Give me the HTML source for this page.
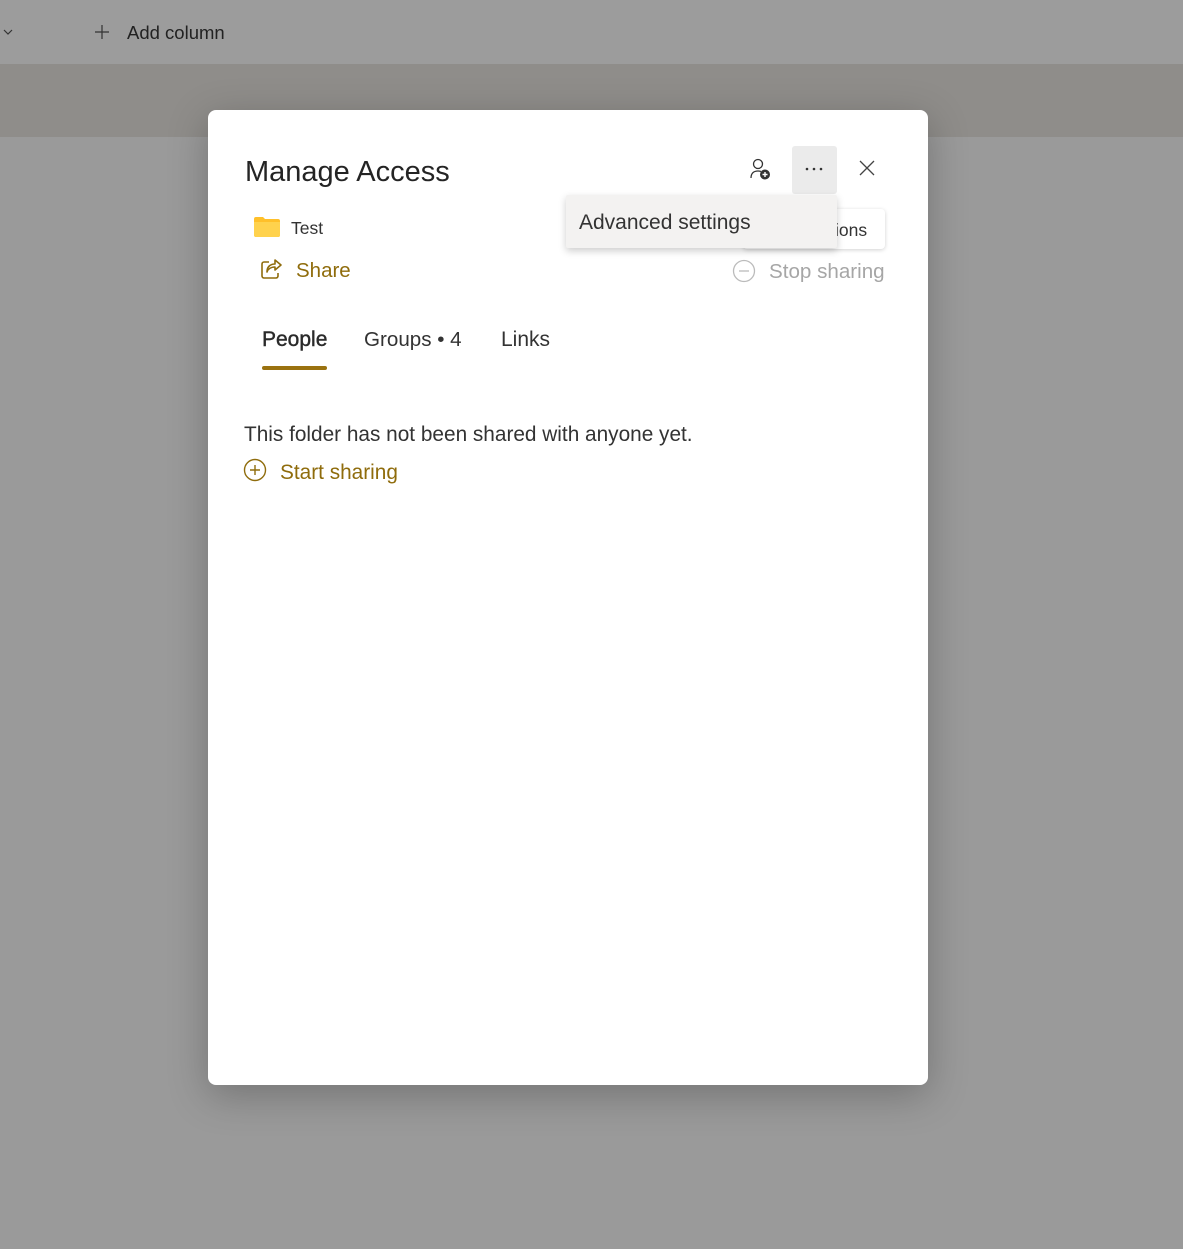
<!DOCTYPE html>
<html><head><meta charset="utf-8"><style>
*{box-sizing:border-box;margin:0;padding:0}
body{width:1183px;height:1249px;background:#9a9a9a;font-family:"Liberation Sans",sans-serif;position:relative;overflow:hidden}
.top{position:absolute;left:0;top:0;width:1183px;height:64px;background:#9c9c9c}
.band{position:absolute;left:0;top:64px;width:1183px;height:73px;background:#8f8d8a}
.abs{position:absolute}
.dlg{position:absolute;left:208px;top:110px;width:720px;height:975px;background:#fff;border-radius:8px;box-shadow:0 10px 40px rgba(0,0,0,.25)}
.gold{color:#8f6c0c}
</style></head><body>
<div class="top"></div>
<div class="band"></div>
<svg class="abs" style="left:2px;top:27px" width="12" height="10" viewBox="0 0 12 10"><path d="M2 3l4 4 4-4" fill="none" stroke="#333" stroke-width="1.2"/></svg>
<svg class="abs" style="left:94px;top:24px" width="16" height="16" viewBox="0 0 16 16"><path d="M8 1v14M1 8h14" stroke="#333" stroke-width="1.2"/></svg>
<div class="abs" style="left:127px;top:22px;font-size:18.5px;color:#222">Add column</div>

<div class="dlg">
<div class="abs" style="left:37px;top:46px;font-size:29px;color:#242424">Manage Access</div>
<svg class="abs" style="left:540px;top:47px" width="26" height="26" viewBox="0 0 26 26"><circle cx="10" cy="7" r="4.5" fill="none" stroke="#333" stroke-width="1.3"/><path d="M3 21c0-5 3-7 7-7 1 0 2 .2 3 .5" fill="none" stroke="#333" stroke-width="1.3"/><circle cx="17" cy="17.5" r="5" fill="#333"/><path d="M17 15v5M14.5 17.5h5" stroke="#fff" stroke-width="1.4"/></svg>
<div class="abs" style="left:584px;top:36px;width:45px;height:48px;background:#ebebeb;border-radius:3px"></div>
<svg class="abs" style="left:597px;top:57px" width="18" height="4" viewBox="0 0 18 4"><circle cx="2" cy="2" r="1.3" fill="#333"/><circle cx="9" cy="2" r="1.3" fill="#333"/><circle cx="16" cy="2" r="1.3" fill="#333"/></svg>
<svg class="abs" style="left:651px;top:50px" width="16" height="16" viewBox="0 0 16 16"><path d="M1 1l14 14M15 1L1 15" stroke="#444" stroke-width="1.3"/></svg>

<div class="abs" style="left:535px;top:99px;width:142px;height:40px;background:#fff;border-radius:4px;box-shadow:0 1px 4px rgba(0,0,0,.18);font-size:17.5px;color:#333;padding:11px 0 0 92px">ions</div>
<div class="abs" style="left:358px;top:85px;width:271px;height:53px;background:#f3f2f1;box-shadow:0 3px 8px rgba(0,0,0,.2);font-size:21px;color:#333;padding:16px 0 0 13px;border-radius:2px">Advanced settings</div>

<svg class="abs" style="left:524px;top:149px" width="24" height="24" viewBox="0 0 24 24"><circle cx="12" cy="12" r="10.5" fill="none" stroke="#bbb" stroke-width="1.3"/><path d="M7 12h10" stroke="#bbb" stroke-width="1.3"/></svg>
<div class="abs" style="left:561px;top:150px;font-size:20.6px;color:#a6a6a6">Stop sharing</div>

<svg class="abs" style="left:45px;top:106px" width="28" height="22" viewBox="0 0 28 22"><path d="M1 3a2 2 0 0 1 2-2h7l2 2h13a2 2 0 0 1 2 2v14a2 2 0 0 1-2 2H3a2 2 0 0 1-2-2z" fill="#ffc02a"/><path d="M1 6h26v13a2 2 0 0 1-2 2H3a2 2 0 0 1-2-2z" fill="#ffd24d"/></svg>
<div class="abs" style="left:83px;top:108px;font-size:17.5px;color:#333">Test</div>
<svg class="abs" style="left:52px;top:148px" width="24" height="22" viewBox="0 0 24 22"><path d="M9 4H4a2 2 0 0 0-2 2v12a2 2 0 0 0 2 2h12a2 2 0 0 0 2-2v-3" fill="none" stroke="#8f6c0c" stroke-width="1.6"/><path d="M15 2l6 5-6 5V9c-4 0-7 2-8 5 0-5 3-8 8-8z" fill="none" stroke="#8f6c0c" stroke-width="1.6" stroke-linejoin="round"/></svg>
<div class="abs gold" style="left:88px;top:149px;font-size:20.5px">Share</div>

<div class="abs" style="left:54px;top:218px;font-size:21px;color:#2a2a2a;font-weight:500;-webkit-text-stroke:0.4px #2a2a2a">People</div>
<div class="abs" style="left:54px;top:256px;width:65px;height:4px;background:#9a7210;border-radius:2px"></div>
<div class="abs" style="left:156px;top:218px;font-size:20.6px;color:#333">Groups • 4</div>
<div class="abs" style="left:293px;top:218px;font-size:21px;color:#333">Links</div>

<div class="abs" style="left:36px;top:313px;font-size:20.8px;color:#333">This folder has not been shared with anyone yet.</div>
<svg class="abs" style="left:35px;top:348px" width="24" height="24" viewBox="0 0 24 24"><circle cx="12" cy="12" r="10.5" fill="none" stroke="#8f6c0c" stroke-width="1.4"/><path d="M12 7v10M7 12h10" stroke="#8f6c0c" stroke-width="1.4"/></svg>
<div class="abs gold" style="left:72px;top:351px;font-size:20.8px">Start sharing</div>
</div>
</body></html>
